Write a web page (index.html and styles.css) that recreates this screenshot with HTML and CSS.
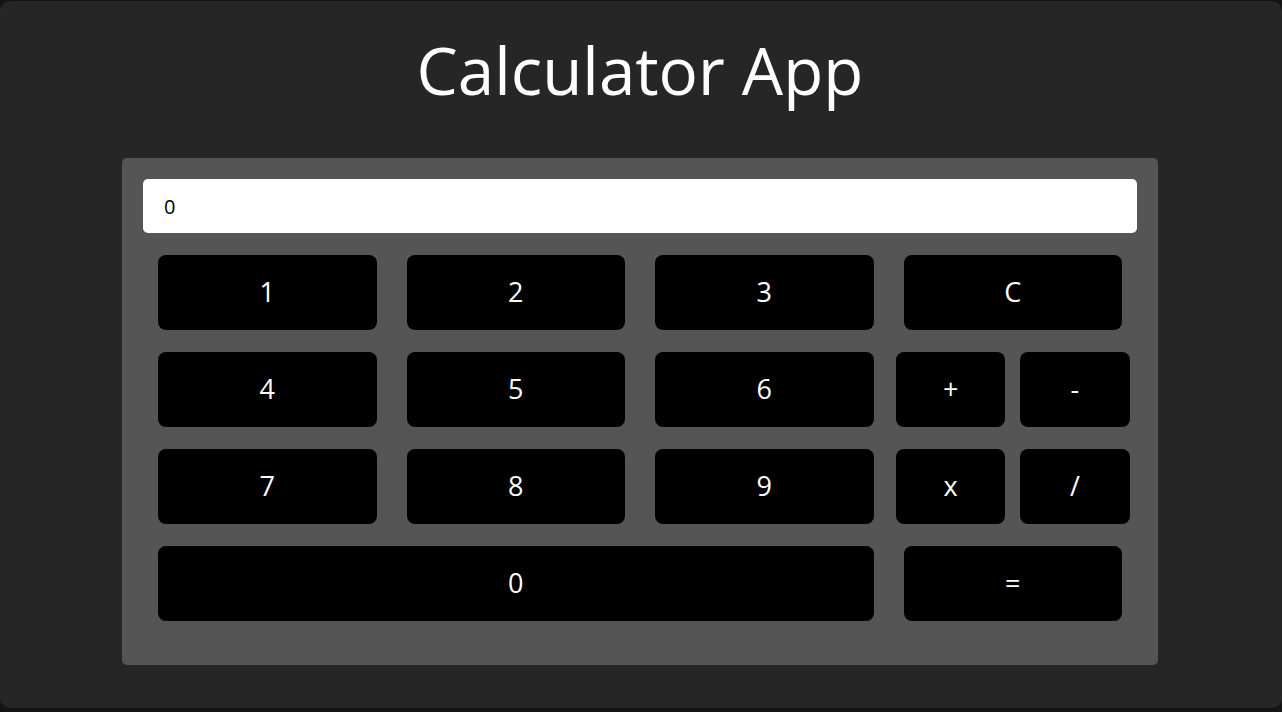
FILE: index.html
```html
<!DOCTYPE html>
<html lang="en">
<head>
<meta charset="utf-8">
<title>Calculator App</title>
<link rel="stylesheet" href="styles.css">
</head>
<body>
<div class="app">
  <h1 class="title">Calculator App</h1>
  <div class="calculator">
    <div class="display">0</div>
    <div class="keys">
      <button class="key">1</button>
      <button class="key">2</button>
      <button class="key">3</button>
      <button class="key">C</button>
      <button class="key">4</button>
      <button class="key">5</button>
      <button class="key">6</button>
      <div class="ops">
        <button class="key op">+</button>
        <button class="key op">-</button>
      </div>
      <button class="key">7</button>
      <button class="key">8</button>
      <button class="key">9</button>
      <div class="ops">
        <button class="key op">x</button>
        <button class="key op">/</button>
      </div>
      <button class="key zero">0</button>
      <button class="key">=</button>
    </div>
  </div>
</div>
</body>
</html>
```
FILE: styles.css
```css
html, body {
  margin: 0;
  padding: 0;
  background: #141414;
  height: 100%;
  overflow: hidden;
}

.app {
  box-sizing: border-box;
  margin-top: 1px;
  height: 707px;
  padding-right: 2px;
  background: #262626;
  border-radius: 10px;
  display: flex;
  flex-direction: column;
  align-items: center;
  font-family: "Open Sans", "Noto Sans", sans-serif;
}

.title {
  margin: 0;
  padding-top: 26px;
  font-size: 65.5px;
  font-weight: 400;
  color: #ffffff;
  line-height: 86px;
}

.calculator {
  box-sizing: border-box;
  margin-top: 45px;
  width: 1036px;
  background: #555555;
  border-radius: 5px;
  padding: 21px 21px 44px;
}

.display {
  box-sizing: border-box;
  height: 54px;
  background: #ffffff;
  border-radius: 5px;
  padding-left: 21px;
  display: flex;
  align-items: center;
  font-size: 20px;
  color: #000000;
}

.keys {
  margin-top: 22px;
  display: grid;
  grid-template-columns: repeat(4, 1fr);
  grid-auto-rows: 75px;
  row-gap: 22px;
}

.key {
  box-sizing: border-box;
  height: 75px;
  margin: 0 15px;
  border: none;
  border-radius: 8px;
  background: #000000;
  color: #ffffff;
  font-family: "Open Sans", "Noto Sans", sans-serif;
  font-size: 27px;
  padding: 0 0 3px;
}

.ops {
  display: flex;
  gap: 15px;
  padding: 0 7.5px;
}

.key.op {
  flex: 1;
  margin: 0;
}

.zero {
  grid-column: span 3;
}
```
